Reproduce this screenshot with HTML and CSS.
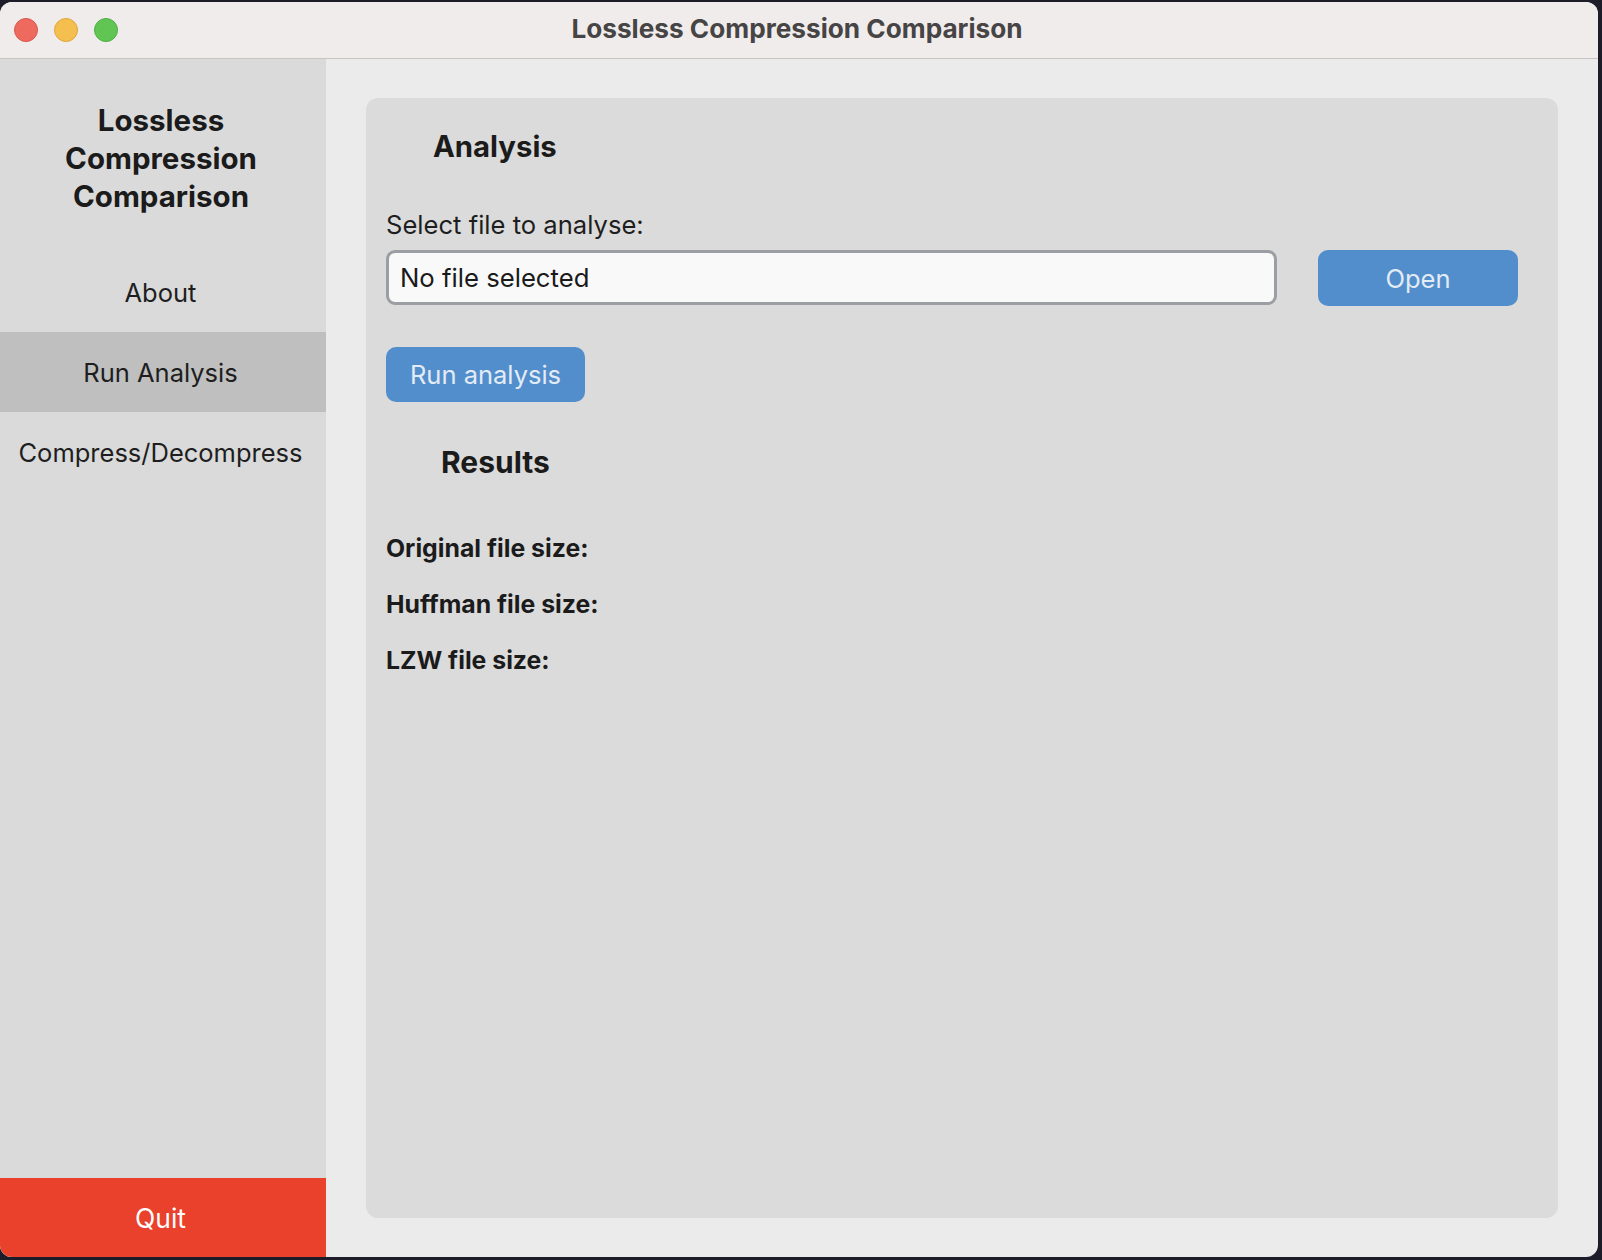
FILE: index.html
```html
<!DOCTYPE html>
<html lang="en">
<head>
<meta charset="utf-8">
<title>Lossless Compression Comparison</title>
<link rel="stylesheet" href="styles.css">
</head>
<body>
<div class="window">
  <header class="titlebar">
    <div class="lights">
      <span class="light red"></span>
      <span class="light yellow"></span>
      <span class="light green"></span>
    </div>
    <div class="title">Lossless Compression Comparison</div>
  </header>
  <div class="body">
    <aside class="sidebar">
      <div class="app-name">Lossless<br>Compression<br>Comparison</div>
      <nav class="nav">
        <div class="nav-item">About</div>
        <div class="nav-item active">Run Analysis</div>
        <div class="nav-item">Compress/Decompress</div>
      </nav>
      <div class="quit">Quit</div>
    </aside>
    <main class="main">
      <section class="card">
        <h2 class="heading heading-analysis">Analysis</h2>
        <div class="label">Select file to analyse:</div>
        <div class="file-row">
          <div class="file-input">No file selected</div>
          <div class="btn btn-open">Open</div>
        </div>
        <div class="btn btn-run">Run analysis</div>
        <h2 class="heading heading-results">Results</h2>
        <div class="results">
          <div class="result">Original file size:</div>
          <div class="result">Huffman file size:</div>
          <div class="result">LZW file size:</div>
        </div>
      </section>
    </main>
  </div>
</div>
</body>
</html>
```
FILE: styles.css
```css
* { box-sizing: border-box; }
html, body { margin: 0; padding: 0; }
body {
  background: #1c1d29;
  width: 1602px;
  height: 1260px;
  overflow: hidden;
  font-family: Inter, "Noto Sans", "Liberation Sans", sans-serif;
  color: #1e1e1e;
}
.window {
  margin-top: 2px;
  width: 1598px;
  height: 1255px;
  border-radius: 12px;
  overflow: hidden;
  display: flex;
  flex-direction: column;
  background: #ebebeb;
}
.titlebar {
  position: relative;
  height: 57px;
  flex: none;
  background: #f0ecec;
  border-bottom: 1px solid #c8c4c4;
  display: flex;
  align-items: center;
  justify-content: center;
}
.lights {
  position: absolute;
  left: 14px;
  top: 16px;
  display: flex;
  gap: 16px;
}
.light {
  width: 24px;
  height: 24px;
  border-radius: 50%;
  display: block;
}
.red { background: #ee6a5f; border: 1px solid #d9574c; }
.yellow { background: #f5bf4f; border: 1px solid #dfa73b; }
.green { background: #61c554; border: 1px solid #4fae43; }
.title {
  font-size: 26.2px;
  font-weight: 700;
  color: #464444;
  margin-left: -4px;
  margin-top: -3px;
}
.body {
  flex: 1;
  display: flex;
  min-height: 0;
}
.sidebar {
  width: 326px;
  flex: none;
  background: #dadada;
  display: flex;
  flex-direction: column;
}
.app-name {
  padding-top: 42px;
  font-size: 29.5px;
  font-weight: 700;
  line-height: 38px;
  text-align: center;
  color: #1b1b1b;
  padding-right: 4px;
}
.nav {
  margin-top: 37px;
}
.nav-item {
  height: 80px;
  display: flex;
  align-items: center;
  justify-content: center;
  font-size: 25.5px;
  color: #1e1e1e;
  padding-right: 5px;
}
.nav-item.active { background: #bfbfbf; }
.quit {
  margin-top: auto;
  height: 79px;
  background: #e9412b;
  color: #ffffff;
  font-size: 26.5px;
  display: flex;
  align-items: center;
  justify-content: center;
  padding-right: 5px;
}
.main {
  flex: 1;
  padding: 39px 40px 39px 40px;
  display: flex;
}
.card {
  flex: 1;
  background: #dbdbdb;
  border-radius: 12px;
  padding: 31px 40px 0 20px;
}
.heading {
  margin: 0;
  font-size: 29.3px;
  font-weight: 700;
  line-height: 36px;
  color: #1b1b1b;
}
.heading-analysis { margin-left: 47px; }
.heading-results { margin-left: 55px; margin-top: 42px; font-size: 30px; }
.label {
  margin-top: 45px;
  font-size: 25.6px;
  line-height: 30px;
  color: #1e1e1e;
}
.file-row {
  margin-top: 10px;
  display: flex;
  gap: 41px;
}
.file-input {
  flex: 1;
  height: 55px;
  border: 3px solid #9b9ea2;
  border-radius: 9px;
  background: #f9f9f9;
  font-size: 25.7px;
  display: flex;
  align-items: center;
  padding-left: 11px;
  color: #1a1a1a;
}
.btn {
  background: #528ecc;
  color: #e3ebf5;
  border-radius: 10px;
  font-size: 25.5px;
  display: flex;
  align-items: center;
  justify-content: center;
}
.btn-open { width: 200px; height: 56px; }
.btn-run { width: 199px; height: 55px; margin-top: 41px; }
.results {
  margin-top: 53px;
  display: flex;
  flex-direction: column;
  gap: 26px;
}
.result {
  font-size: 24.8px;
  line-height: 30px;
  font-weight: 700;
  color: #1b1b1b;
}
```
